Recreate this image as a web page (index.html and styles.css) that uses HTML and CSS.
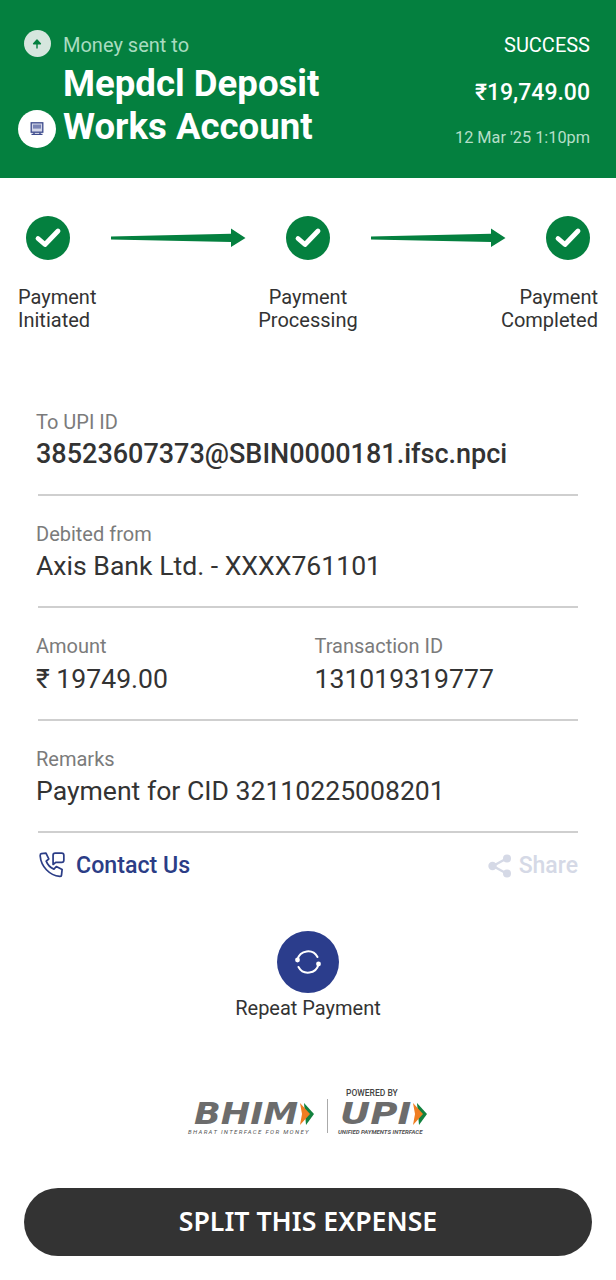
FILE: index.html
```html
<!DOCTYPE html>
<html lang="en">
<head>
<meta charset="utf-8">
<title>Payment receipt</title>
<link rel="stylesheet" href="styles.css">
</head>
<body>
<header class="hero">
  <div class="hero-icons">
    <span class="badge badge-up">
      <svg viewBox="0 0 12 12" width="12" height="12"><path d="M6 10.500V4.500M2.600 5.800 6 2l3.400 3.800z" fill="#04803f" stroke="#04803f" stroke-width="1.400" stroke-linejoin="round"/></svg>
    </span>
    <span class="badge badge-bank">
      <svg viewBox="0 0 16 16" width="16" height="16"><rect x="2.200" y="1.800" width="11.600" height="9.400" fill="#d3d6e8" stroke="#3d4a8c" stroke-width="1.300"/><rect x="4" y="3.600" width="8" height="4" fill="#7a84b5"/><path d="M2.500 13.400h11M5 11.400v2M11 11.400v2" stroke="#3d4a8c" stroke-width="1.400"/></svg>
    </span>
  </div>
  <div class="hero-main">
    <div class="hero-caption">Money sent to</div>
    <h1 class="hero-title">Mepdcl Deposit<br>Works Account</h1>
  </div>
  <div class="hero-side">
    <div class="status">SUCCESS</div>
    <div class="hero-amount">₹19,749.00</div>
    <div class="hero-date">12 Mar '25 1:10pm</div>
  </div>
</header>

<section class="steps">
  <div class="step-track">
    <span class="tick"><svg viewBox="0 0 44 44" width="44" height="44"><path d="M12 22.500l7 6L32 15" fill="none" stroke="#fff" stroke-width="4.800" stroke-linecap="round" stroke-linejoin="round"/></svg></span>
    <svg class="arrow" viewBox="0 0 136 20" width="136" height="20"><path d="M1 8.400 121 5.800V.500L135.500 10 121 19V14L1 11.400z" fill="#04803f"/></svg>
    <span class="tick"><svg viewBox="0 0 44 44" width="44" height="44"><path d="M12 22.500l7 6L32 15" fill="none" stroke="#fff" stroke-width="4.800" stroke-linecap="round" stroke-linejoin="round"/></svg></span>
    <svg class="arrow" viewBox="0 0 136 20" width="136" height="20"><path d="M1 8.400 121 5.800V.500L135.500 10 121 19V14L1 11.400z" fill="#04803f"/></svg>
    <span class="tick"><svg viewBox="0 0 44 44" width="44" height="44"><path d="M12 22.500l7 6L32 15" fill="none" stroke="#fff" stroke-width="4.800" stroke-linecap="round" stroke-linejoin="round"/></svg></span>
  </div>
  <div class="step-labels">
    <div class="step-label step-left">Payment<br>Initiated</div>
    <div class="step-label step-mid">Payment<br>Processing</div>
    <div class="step-label step-right">Payment<br>Completed</div>
  </div>
</section>

<main class="details">
  <div class="row">
    <div class="field">
      <div class="label">To UPI ID</div>
      <div class="value value-strong">38523607373@SBIN0000181.ifsc.npci</div>
    </div>
  </div>
  <div class="row">
    <div class="field">
      <div class="label">Debited from</div>
      <div class="value">Axis Bank Ltd. - XXXX761101</div>
    </div>
  </div>
  <div class="row row-split">
    <div class="field">
      <div class="label">Amount</div>
      <div class="value">₹ 19749.00</div>
    </div>
    <div class="field">
      <div class="label">Transaction ID</div>
      <div class="value">131019319777</div>
    </div>
  </div>
  <div class="row">
    <div class="field">
      <div class="label">Remarks</div>
      <div class="value">Payment for CID 32110225008201</div>
    </div>
  </div>
</main>

<div class="actions">
  <div class="contact">
    <svg viewBox="0 0 26 26" width="28" height="28"><path d="M3.200 2.500 7.400 2 10 7.400 7.600 9.400c1.300 3.400 3.800 6 7.200 7.400l2.200-2.400 5.400 2.800-.6 5.400c-.1.800-.8 1-1.600 1C10.600 22.600 2.800 14.500 2 4.400c0-.9.400-1.800 1.200-1.900z" fill="none" stroke="#2b3d86" stroke-width="1.600" stroke-linejoin="round"/><path d="M14 12.500V3.800C14 2.600 14.800 2 16 2h6c1.200 0 2 .8 2 2v4.500c0 1.200-.8 2-2 2h-5.500z" fill="none" stroke="#2b3d86" stroke-width="1.600" stroke-linejoin="round"/></svg>
    <span>Contact Us</span>
  </div>
  <div class="share">
    <svg viewBox="0 0 26 26" width="26" height="26"><path d="M19.500 5.500 6 13l13.500 7.500" fill="none" stroke="#d5d9e6" stroke-width="2.400"/><circle cx="20" cy="5.500" r="4" fill="#d5d9e6"/><circle cx="5.500" cy="13" r="4.200" fill="#d5d9e6"/><circle cx="20" cy="20.500" r="4" fill="#d5d9e6"/></svg>
    <span>Share</span>
  </div>
</div>

<div class="repeat">
  <span class="repeat-btn">
    <svg viewBox="0 0 30 30" width="30" height="30"><path d="M4.500 12.500A10.800 10.800 0 0 1 24.500 10M25.500 17.500A10.800 10.800 0 0 1 5.500 20" fill="none" stroke="#fff" stroke-width="2" stroke-linecap="round"/><circle cx="4.500" cy="13" r="2.400" fill="#fff"/><circle cx="25.500" cy="17" r="2.400" fill="#fff"/></svg>
  </span>
  <span class="repeat-label">Repeat Payment</span>
</div>

<div class="brand">
  <div class="brand-item">
    <div class="brand-mark brand-mark-bhim">
      <span class="brand-word brand-word-bhim">BHIM</span>
      <svg viewBox="0 0 16 24" width="16" height="24"><path d="M5 1 15 12 7 23z" fill="#12813e"/><path d="M1 1 11 12 1 23 3 12z" fill="#ef7d22"/></svg>
    </div>
    <div class="brand-sub brand-sub-wide">BHARAT INTERFACE FOR MONEY</div>
  </div>
  <span class="brand-rule"></span>
  <div class="brand-item">
    <div class="brand-pow">POWERED BY</div>
    <div class="brand-mark">
      <span class="brand-word brand-word-upi">UPI</span>
      <svg viewBox="0 0 16 24" width="16" height="24"><path d="M5 1 15 12 7 23z" fill="#12813e"/><path d="M1 1 11 12 1 23 3 12z" fill="#ef7d22"/></svg>
    </div>
    <div class="brand-sub">UNIFIED PAYMENTS INTERFACE</div>
  </div>
</div>

<div class="cta-wrap">
  <button class="cta" type="button">SPLIT THIS EXPENSE</button>
</div>
</body>
</html>
```

FILE: styles.css
```css
* { box-sizing: border-box; }
html, body { margin: 0; padding: 0; }
body {
  width: 616px;
  height: 1280px;
  overflow: hidden;
  background: #fff;
  font-family: Roboto, "Liberation Sans", sans-serif;
  color: #333;
}

.hero {
  height: 178px;
  background: #04803f;
  display: grid;
  grid-template-columns: 38px 1fr auto;
  column-gap: 7px;
  padding: 30px 26px 0 18px;
  color: #fff;
}
.hero-icons { display: flex; flex-direction: column; align-items: center; }
.badge { display: flex; align-items: center; justify-content: center; border-radius: 50%; }
.badge-up { width: 27px; height: 27px; background: #d6e6de; }
.badge-bank { width: 38px; height: 38px; background: #fff; margin-top: 53px; }
.hero-caption { font-size: 20px; line-height: 30px; color: #a9dcc0; }
.hero-title { margin: 2px 0 0; font-size: 36.600px; line-height: 43px; font-weight: 700; }
.hero-side { display: flex; flex-direction: column; align-items: flex-end; }
.status { font-size: 20px; line-height: 30px; }
.hero-amount { font-size: 23px; line-height: 30px; margin-top: 18px; font-weight: 500; }
.hero-date { font-size: 16.300px; line-height: 20px; margin-top: 20px; color: #b5dfc8; }

.steps { padding: 38px 18px 0; }
.step-track { display: flex; align-items: center; justify-content: space-between; padding: 0 8px; }
.tick { width: 44px; height: 44px; border-radius: 50%; background: #04803f; display: block; }
.tick svg { display: block; }
.arrow { display: block; }
.step-labels { display: grid; grid-template-columns: 1fr 1fr 1fr; margin-top: 26px; }
.step-label { font-size: 20px; line-height: 23px; color: #333; }
.step-left { text-align: left; }
.step-mid { text-align: center; }
.step-right { text-align: right; }

.details { padding: 0 38px; margin-top: 67px; }
.row { height: 112.300px; border-bottom: 2px solid #cfcfcf; padding-top: 26px; }
.row:first-child { height: 97px; padding-top: 11px; }
.row-split { display: grid; grid-template-columns: 278.500px 1fr; }
.field { margin-left: -2px; }
.label { font-size: 20px; line-height: 24px; color: #7b7b7b; }
.value { font-size: 26.600px; line-height: 36px; color: #333; margin-top: 2px; }
.row-split .value { margin-top: 3px; }
.value-strong { font-size: 27px; font-weight: 500; }

.actions { display: flex; align-items: center; justify-content: space-between; padding: 0 38px; height: 64px; }
.contact, .share { display: flex; align-items: center; font-size: 23.200px; font-weight: 500; }
.contact { color: #2b3d86; gap: 10px; }
.share { color: #d5d9e6; gap: 6px; font-size: 23px; padding-top: 2px; }
.contact svg, .share svg { display: block; }

.repeat { display: flex; flex-direction: column; align-items: center; margin-top: 34px; }
.repeat-btn { width: 62px; height: 62px; border-radius: 50%; background: #2b3d8c; display: flex; align-items: center; justify-content: center; }
.repeat-label { font-size: 20px; line-height: 24px; margin-top: 3px; color: #333; }

.brand { display: flex; justify-content: center; align-items: flex-end; margin-top: 69px; height: 46px; color: #666; }
.brand-item { display: flex; flex-direction: column; }
.brand-mark { display: flex; align-items: center; gap: 0; height: 26px; }
.brand-mark-bhim { padding-left: 6px; }
.brand-word { display: block; font-family: "DejaVu Sans", sans-serif; font-size: 30px; line-height: 26px; font-weight: 700; font-style: oblique; color: #6c6c6c; transform-origin: left center; white-space: nowrap; }
.brand-word-bhim { width: 105px; transform: scaleX(1.17); }
.brand-word-upi { width: 72px; margin-left: 2px; transform: scaleX(1.24); }
.brand-sub { font-size: 6px; line-height: 7px; font-style: italic; font-weight: 700; color: #555; margin-top: 1px; white-space: nowrap; }
.brand-sub-wide { letter-spacing: 1.350px; font-weight: 400; }
.brand-pow { font-size: 8.500px; line-height: 9px; font-weight: 500; color: #444; padding-left: 8px; margin-bottom: 3px; }
.brand-rule { width: 1px; height: 34px; background: #aaa; margin: 0 10px 2px 12px; }

.cta-wrap { padding: 0 24px; margin-top: 53px; }
.cta { display: block; width: 100%; height: 68px; border: 0; border-radius: 34px; padding: 0 0 2px; background: #333; color: #fff; font-family: "Noto Sans", sans-serif; font-size: 26.700px; font-weight: 600; }
```
